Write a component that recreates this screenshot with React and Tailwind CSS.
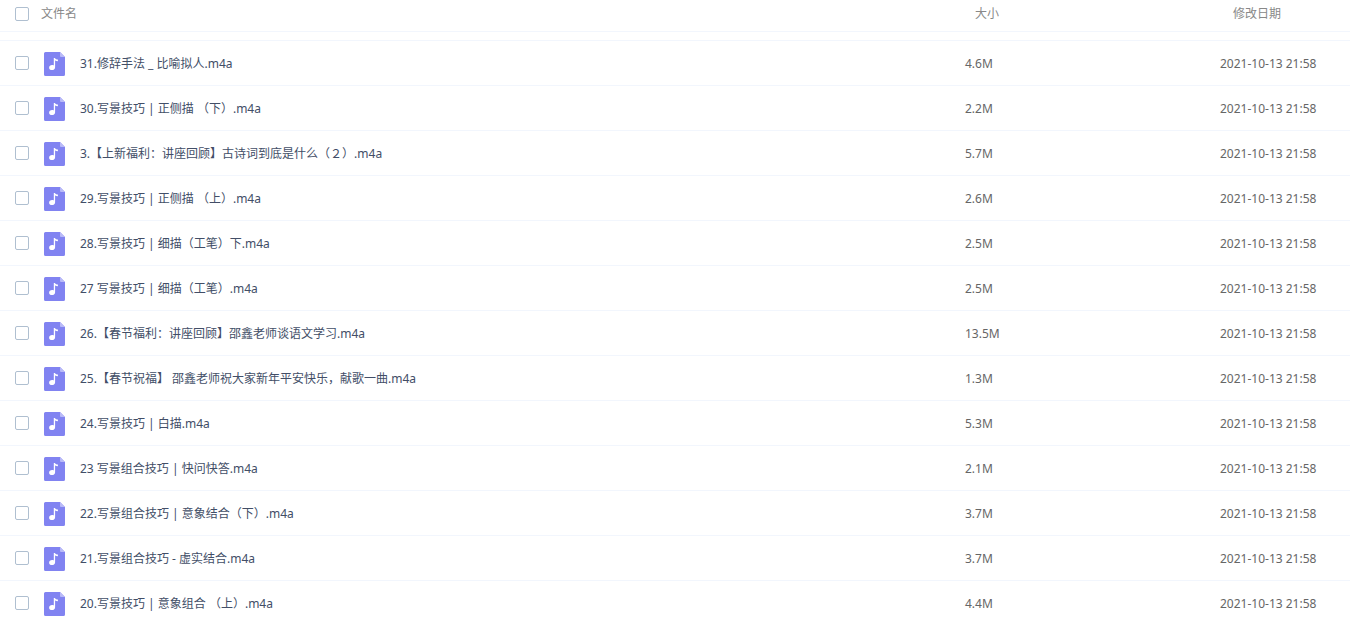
const DATE = "2021-10-13 21:58";

const files = [
  { name: "31.修辞手法 _ 比喻拟人.m4a", size: "4.6M" },
  { name: "30.写景技巧 | 正侧描 （下）.m4a", size: "2.2M" },
  { name: "3.【上新福利：讲座回顾】古诗词到底是什么（２）.m4a", size: "5.7M" },
  { name: "29.写景技巧 | 正侧描 （上）.m4a", size: "2.6M" },
  { name: "28.写景技巧 | 细描（工笔）下.m4a", size: "2.5M" },
  { name: "27 写景技巧 | 细描（工笔）.m4a", size: "2.5M" },
  { name: "26.【春节福利：讲座回顾】邵鑫老师谈语文学习.m4a", size: "13.5M" },
  { name: "25.【春节祝福】 邵鑫老师祝大家新年平安快乐，献歌一曲.m4a", size: "1.3M" },
  { name: "24.写景技巧 | 白描.m4a", size: "5.3M" },
  { name: "23 写景组合技巧 | 快问快答.m4a", size: "2.1M" },
  { name: "22.写景组合技巧 | 意象结合（下）.m4a", size: "3.7M" },
  { name: "21.写景组合技巧 - 虚实结合.m4a", size: "3.7M" },
  { name: "20.写景技巧 | 意象组合 （上）.m4a", size: "4.4M" },
];

function Checkbox({ id, label }) {
  return (
    <input
      id={id}
      type="checkbox"
      aria-label={label}
      className="block size-3.5 shrink-0 appearance-none rounded-[2px] border border-[#afbfd0] bg-white checked:bg-[#8183f1]"
    />
  );
}

function AudioFileIcon() {
  return (
    <svg viewBox="0 0 21 24" className="h-6 w-[21px] shrink-0" aria-hidden="true">
      <path d="M1.500 0H16l5 5v17.500a1.500 1.500 0 0 1-1.500 1.500h-18A1.500 1.500 0 0 1 0 22.500v-21A1.500 1.500 0 0 1 1.500 0Z" fill="#8183f1" />
      <path d="M16 0l5 5h-4a1 1 0 0 1-1-1Z" fill="#b9baf8" />
      <path d="M9.800 6h1.200c.3 1.100 1.300 1.400 2.900 1.500v1.700c-1.200 0-2.100-.2-2.800-.7v6.700c0 1.800-1.300 2.900-3.100 2.900-1.700 0-2.900-1-2.900-2.400 0-1.600 1.300-2.700 3-2.700.7 0 1.200.1 1.700.4Z" fill="#fff" />
    </svg>
  );
}

export default function App() {
  return (
    <main className="h-screen overflow-hidden bg-white font-['Noto_Sans','Noto_Sans_CJK_SC',sans-serif] text-xs text-[#666]">
      <table className="w-full table-fixed border-separate border-spacing-0 text-left">
        <colgroup>
          <col />
          <col className="w-[255px]" />
          <col className="w-[130px]" />
        </colgroup>
        <thead className="text-[#888]">
          <tr>
            <th className="h-8 border-b border-[#f2f6fd] pb-1 pl-[15px] font-normal">
              <div className="flex items-center gap-3">
                <Checkbox id="select-all" label="全选" />
                <label htmlFor="select-all">文件名</label>
              </div>
            </th>
            <th className="border-b border-[#f2f6fd] pb-1 pl-2.5 font-normal">大小</th>
            <th className="border-b border-[#f2f6fd] pb-1 pl-[13px] font-normal">修改日期</th>
          </tr>
        </thead>
        <tbody>
          <tr aria-hidden="true">
            <td colSpan={3} className="h-[9px] border-b border-[#f2f6fd]" />
          </tr>
          {files.map((file, i) => (
            <tr key={file.name}>
              <td className="h-[45px] border-b border-[#f2f6fd] pl-[15px]">
                <div className="flex items-center gap-[15px]">
                  <Checkbox id={`file-${i}`} label={file.name} />
                  <div className="flex min-w-0 items-center gap-[15px] pt-0.5">
                    <AudioFileIcon />
                    <label htmlFor={`file-${i}`} className="truncate text-[#424e67]">
                      {file.name}
                    </label>
                  </div>
                </div>
              </td>
              <td className="border-b border-[#f2f6fd] pt-0.5">{file.size}</td>
              <td className="border-b border-[#f2f6fd] pt-0.5">{DATE}</td>
            </tr>
          ))}
        </tbody>
      </table>
    </main>
  );
}
